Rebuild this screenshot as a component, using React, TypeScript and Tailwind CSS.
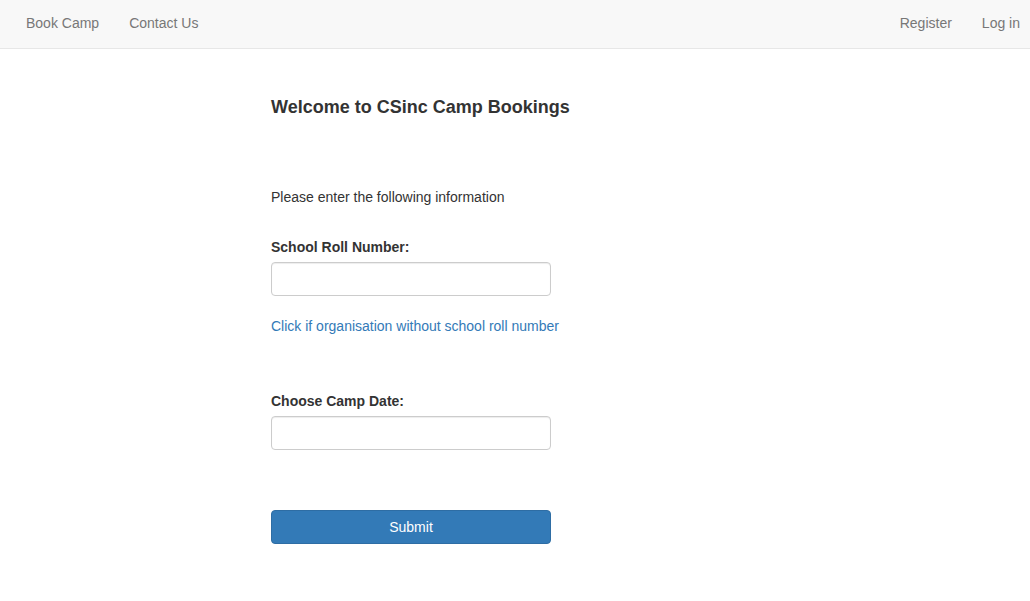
import React from "react";

const font = { fontFamily: '"Liberation Sans", Arial, sans-serif' };

export default function App() {
  return (
    <div className="min-h-[601px] bg-white text-[#333] text-[14px]" style={font}>
      <nav className="h-[49px] bg-[#f8f8f8] border-b border-[#e7e7e7] flex items-center justify-between pb-[2px]">
        <div className="flex gap-[30px] pl-[26px] text-[#777] leading-5">
          <a href="#">Book Camp</a>
          <a href="#">Contact Us</a>
        </div>
        <div className="flex gap-[30px] pr-[10px] text-[#777] leading-5">
          <a href="#">Register</a>
          <a href="#">Log in</a>
        </div>
      </nav>

      <main className="pl-[271px] pt-[48px]">
        <h4 className="text-[18px] font-bold leading-5">Welcome to CSinc Camp Bookings</h4>
        <p className="mt-[70px] leading-5">Please enter the following information</p>

        <form className="w-[280px]">
          <label className="block mt-[30px] mb-[5px] font-bold leading-5">School Roll Number:</label>
          <input
            type="text"
            className="block w-full h-[34px] px-3 border border-[#ccc] rounded-[4px] shadow-[inset_0_1px_1px_rgba(0,0,0,0.075)] outline-none"
          />
          <a href="#" className="block mt-5 leading-5 whitespace-nowrap text-[#337ab7]">
            Click if organisation without school roll number
          </a>

          <label className="block mt-[55px] mb-[5px] font-bold leading-5">Choose Camp Date:</label>
          <input
            type="text"
            className="block w-full h-[34px] px-3 border border-[#ccc] rounded-[4px] shadow-[inset_0_1px_1px_rgba(0,0,0,0.075)] outline-none"
          />

          <button
            type="submit"
            className="block mt-[60px] w-full h-[34px] bg-[#337ab7] border border-[#2e6da4] rounded-[4px] text-white leading-5"
          >
            Submit
          </button>
        </form>
      </main>
    </div>
  );
}
